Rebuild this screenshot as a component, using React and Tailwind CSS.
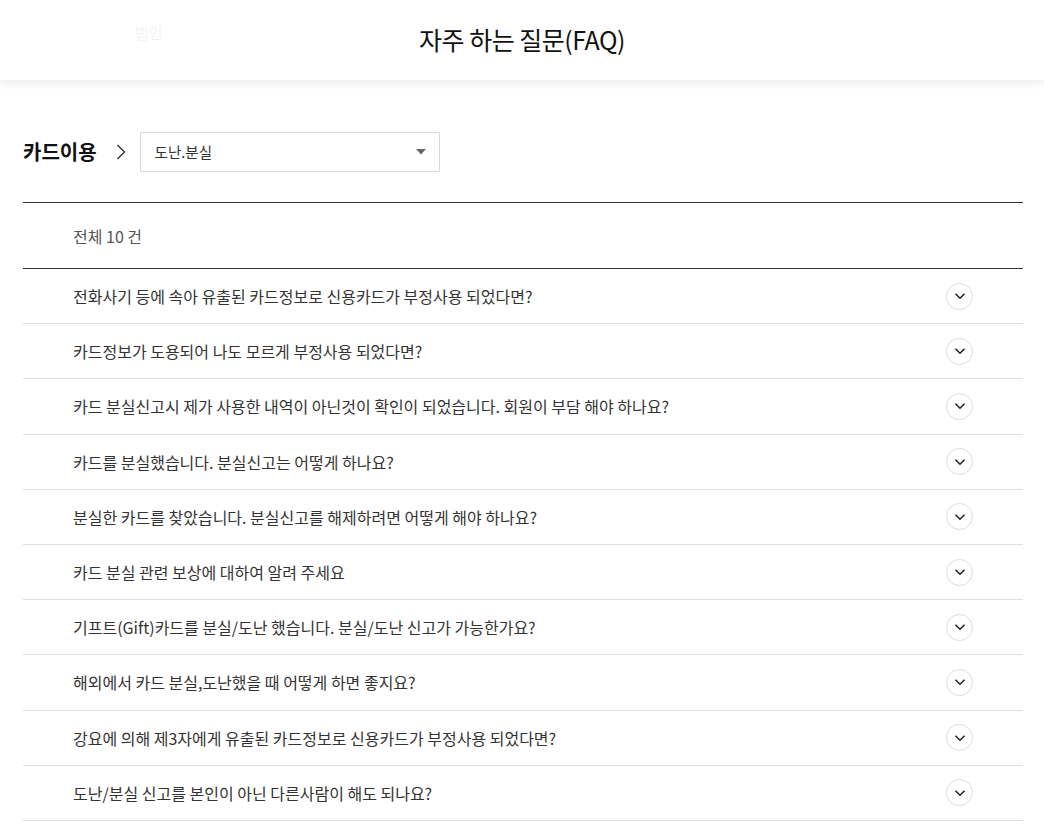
import React from 'react';

const questions = [
  '전화사기 등에 속아 유출된 카드정보로 신용카드가 부정사용 되었다면?',
  '카드정보가 도용되어 나도 모르게 부정사용 되었다면?',
  '카드 분실신고시 제가 사용한 내역이 아닌것이 확인이 되었습니다. 회원이 부담 해야 하나요?',
  '카드를 분실했습니다. 분실신고는 어떻게 하나요?',
  '분실한 카드를 찾았습니다. 분실신고를 해제하려면 어떻게 해야 하나요?',
  '카드 분실 관련 보상에 대하여 알려 주세요',
  '기프트(Gift)카드를 분실/도난 했습니다. 분실/도난 신고가 가능한가요?',
  '해외에서 카드 분실,도난했을 때 어떻게 하면 좋지요?',
  '강요에 의해 제3자에게 유출된 카드정보로 신용카드가 부정사용 되었다면?',
  '도난/분실 신고를 본인이 아닌 다른사람이 해도 되나요?',
];

const font = { fontFamily: '"Noto Sans CJK KR", "Noto Sans", sans-serif' };

function ChevronCircle() {
  return (
    <span className="w-[27px] h-[27px] rounded-full border border-[#dddddd] flex items-center justify-center">
      <svg width="12" height="8" viewBox="0 0 12 8" fill="none">
        <path d="M1.5 1.8 6 6.2 10.5 1.8" stroke="#222" strokeWidth="1.6" />
      </svg>
    </span>
  );
}

export default function App() {
  return (
    <div className="min-h-[833px] bg-white text-[#333]" style={font}>
      {/* Header */}
      <header className="relative h-[80px] bg-white flex items-center justify-center shadow-[0_3px_8px_rgba(0,0,0,0.08)]">
        <span className="absolute left-[135px] top-[22px] text-[15px] text-[#f4f4f4]">법인</span>
        <h1 className="text-[25px] font-normal text-[#111] tracking-[-0.5px]">자주 하는 질문(FAQ)</h1>
      </header>

      <main className="pl-[23px] pr-[21px] pt-[52px]">
        {/* Category */}
        <div className="flex items-center h-[40px]">
          <span className="text-[20px] font-bold text-[#111]">카드이용</span>
          <svg className="ml-[19px] mr-[14px]" width="10" height="16" viewBox="0 0 10 16" fill="none">
            <path d="M1.5 1 8.5 8 1.5 15" stroke="#333" strokeWidth="1.4" />
          </svg>
          <div className="w-[300px] h-[40px] border border-[#d9d9d9] flex items-center justify-between pl-[14px] pr-[13px]">
            <span className="text-[14.5px] text-[#333]">도난.분실</span>
            <svg width="10" height="6" viewBox="0 0 10 6">
              <path d="M0 0h10L5 5.5z" fill="#666" />
            </svg>
          </div>
        </div>

        {/* List */}
        <div className="mt-[30px] border-t border-[#333]">
          <div className="h-[66px] flex items-center pl-[50px] text-[16px] text-[#555] border-b border-[#333]">
            전체 10 건
          </div>
          <ul>
            {questions.map((q) => (
              <li
                key={q}
                className="h-[55.2px] flex items-center justify-between pl-[50px] pr-[50px] border-b border-[#e1e1e1]"
              >
                <span className="text-[16px] text-[#333]">{q}</span>
                <ChevronCircle />
              </li>
            ))}
          </ul>
        </div>
      </main>
    </div>
  );
}
